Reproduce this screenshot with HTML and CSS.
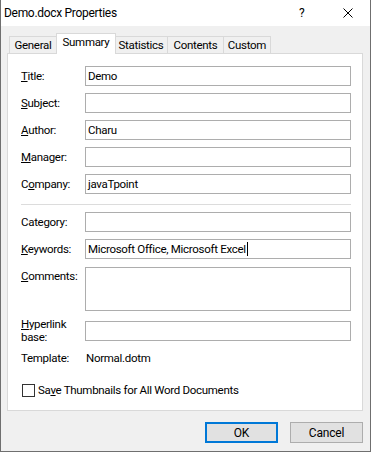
FILE: index.html
```html
<!DOCTYPE html>
<html lang="en">
<head>
    <meta charset="UTF-8">
    <meta name="viewport" content="width=device-width, initial-scale=1.0">
    <title>Demo.docx Properties</title>
    <link rel="stylesheet" href="styles.css">
</head>
<body>
    <div class="window">
        <div class="titlebar">
            <span class="title">Demo.docx Properties</span>
            <span class="help">?</span>
            <svg class="close" width="10" height="10" viewBox="0 0 10 10">
                <path d="M0.5 0.5 L9.5 9.5 M9.5 0.5 L0.5 9.5" stroke="#000" stroke-width="1" fill="none"/>
            </svg>
        </div>

        <div class="tabs">
            <div class="tab tab-general">General</div>
            <div class="tab active">Summary</div>
            <div class="tab tab-stats">Statistics</div>
            <div class="tab tab-contents">Contents</div>
            <div class="tab tab-custom">Custom</div>
        </div>

        <div class="panel">
            <div class="row">
                <label class="label"><u>T</u>itle:</label>
                <div class="field">Demo</div>
            </div>
            <div class="row">
                <label class="label"><u>S</u>ubject:</label>
                <div class="field"></div>
            </div>
            <div class="row">
                <label class="label"><u>A</u>uthor:</label>
                <div class="field">Charu</div>
            </div>
            <div class="row">
                <label class="label"><u>M</u>anager:</label>
                <div class="field"></div>
            </div>
            <div class="row">
                <label class="label">C<u>o</u>mpany:</label>
                <div class="field">javaTpoint</div>
            </div>

            <div class="divider"></div>

            <div class="row">
                <label class="label">Cate<u>g</u>ory:</label>
                <div class="field"></div>
            </div>
            <div class="row row-keys">
                <label class="label"><u>K</u>eywords:</label>
                <div class="field">Microsoft Office, Microsoft Excel<span class="caret"></span></div>
            </div>
            <div class="row row-tall">
                <label class="label"><u>C</u>omments:</label>
                <div class="field area"></div>
            </div>
            <div class="row row-link">
                <label class="label label-wrap"><u>H</u>yperlink<br>base:</label>
                <div class="field"></div>
            </div>
            <div class="row row-text">
                <span class="label">Template:</span>
                <span class="value">Normal.dotm</span>
            </div>

            <div class="check">
                <span class="box"></span>
                <span>Sa<u>v</u>e Thumbnails for All Word Documents</span>
            </div>
        </div>

        <div class="actions">
            <button class="btn default">OK</button>
            <button class="btn">Cancel</button>
        </div>
    </div>
</body>
</html>
```

FILE: styles.css
```css
*{
    margin: 0px;
    padding: 0px;
    box-sizing: border-box;
}
body {
    font-family: Roboto, "Noto Sans", sans-serif;
    font-size: 11.5px;
    letter-spacing: -0.3px;
    color: #000;
    background-color: #fff;
}
.window {
    width: 371px;
    height: 452px;
    background-color: #f0f0f0;
    border: 1px solid #6f6f6f;
    border-top: none;
}
.titlebar {
    height: 26px;
    background-color: #fff;
    display: flex;
    align-items: center;
    padding-left: 3px;
    font-size: 12px;
}
.title {
    flex: 1;
}
.help {
    width: 8px;
    margin-right: 36px;
}
.close {
    margin-right: 17px;
}
.tabs {
    display: flex;
    align-items: flex-end;
    height: 27px;
    padding-left: 8px;
}
.tab {
    height: 17px;
    line-height: 16px;
    text-align: center;
    border: 1px solid #d9d9d9;
    border-bottom: none;
    border-left: none;
    background-color: #f0f0f0;
    position: relative;
}
.tab-general {
    width: 48px;
    border-left: 1px solid #d9d9d9;
}
.tab-stats {
    width: 53px;
}
.tab-contents {
    width: 56px;
}
.tab-custom {
    width: 47px;
}
.tab.active {
    width: 60px;
    height: 21px;
    line-height: 17px;
    margin: 0 -1px -1px -1px;
    border-left: 1px solid #d9d9d9;
    background-color: #fff;
    z-index: 1;
}
.panel {
    margin-left: 6px;
    width: 356px;
    height: 358px;
    background-color: #fff;
    border: 1px solid #d9d9d9;
    padding: 12px 11px 0 13px;
}
.row {
    display: flex;
    align-items: center;
    height: 20px;
    margin-bottom: 7px;
}
.label {
    width: 64px;
    flex-shrink: 0;
}
.field {
    flex: 1;
    height: 20px;
    border: 1px solid #adadad;
    padding-left: 2px;
    line-height: 18px;
    white-space: nowrap;
    overflow: hidden;
}
.caret {
    display: inline-block;
    width: 1px;
    height: 14px;
    margin-left: 1px;
    background-color: #000;
    vertical-align: -3px;
}
.divider {
    height: 1px;
    background-color: #dcdcdc;
    margin: 10px 0 7px 0;
}
.row-keys {
    margin-bottom: 8px;
}
.row-tall {
    height: 44px;
    align-items: flex-start;
    margin-bottom: 10px;
}
.row-tall .label {
    padding-top: 2px;
}
.area {
    height: 44px;
}
.row-link {
    margin-bottom: 8px;
}
.label-wrap {
    line-height: 13px;
}
.row-text {
    height: 18px;
    margin-bottom: 16px;
}
.value {
    padding-left: 1px;
}
.check {
    display: flex;
    align-items: center;
    gap: 3px;
    padding-left: 1px;
}
.box {
    width: 13px;
    height: 13px;
    border: 1px solid #333;
    background-color: #fff;
}
.actions {
    display: flex;
    justify-content: flex-end;
    gap: 12px;
    padding: 11px 7px 0 0;
}
.btn {
    width: 73px;
    height: 21px;
    font-family: inherit;
    font-size: 12px;
    letter-spacing: -0.2px;
    background-color: #e1e1e1;
    border: 1px solid #adadad;
    color: #000;
}
.btn.default {
    border: 2px solid #0078d7;
}
```
